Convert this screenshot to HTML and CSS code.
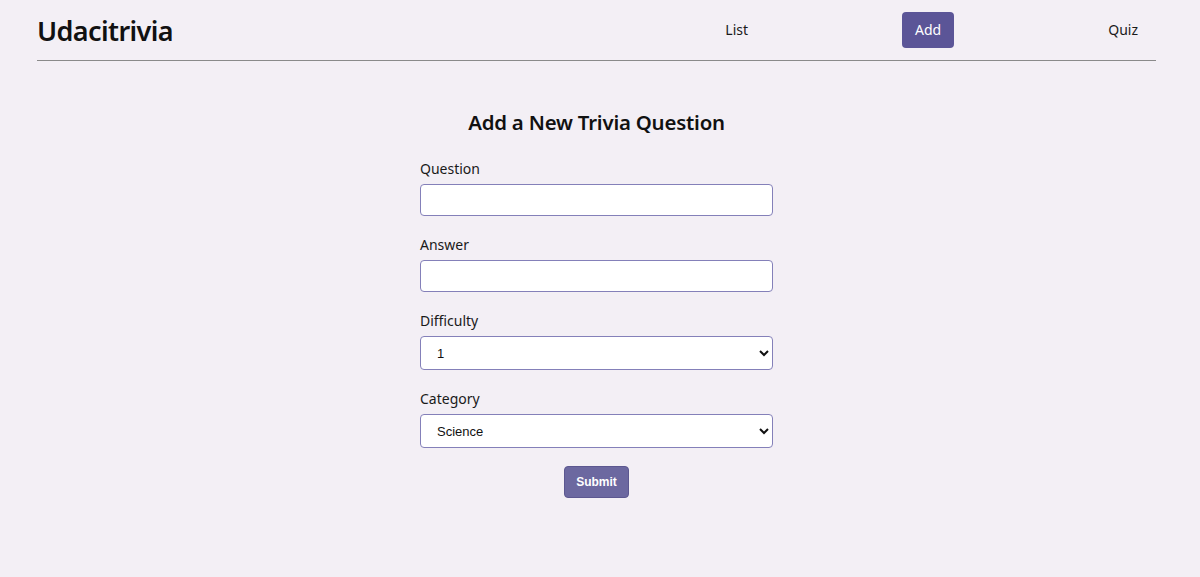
FILE: index.html
```html
<!DOCTYPE html>
<html lang="en">
<head>
<meta charset="utf-8">
<title>Udacitrivia</title>
<link rel="stylesheet" href="styles.css">
</head>
<body>
<div class="app">
  <header class="header">
    <h1 class="brand">Udacitrivia</h1>
    <nav class="nav">
      <span class="nav-item">List</span>
      <span class="nav-item nav-item-active">Add</span>
      <span class="nav-item">Quiz</span>
    </nav>
  </header>
  <main class="main">
    <h2 class="form-title">Add a New Trivia Question</h2>
    <form class="form">
      <div class="field">
        <label class="label">Question</label>
        <input class="input" type="text">
      </div>
      <div class="field">
        <label class="label">Answer</label>
        <input class="input" type="text">
      </div>
      <div class="field">
        <label class="label">Difficulty</label>
        <select class="select">
          <option>1</option>
          <option>2</option>
          <option>3</option>
          <option>4</option>
          <option>5</option>
        </select>
      </div>
      <div class="field">
        <label class="label">Category</label>
        <select class="select">
          <option>Science</option>
          <option>Art</option>
          <option>Geography</option>
          <option>History</option>
          <option>Entertainment</option>
          <option>Sports</option>
        </select>
      </div>
      <div class="actions">
        <button class="submit" type="button">Submit</button>
      </div>
    </form>
  </main>
</div>
</body>
</html>
```
FILE: styles.css
```css
* { box-sizing: border-box; }
html, body {
  margin: 0;
  padding: 0;
  background: #f3eff5;
  height: 100%;
}
body {
  font-family: "Noto Sans", "Open Sans", sans-serif;
  color: #111;
}
.app {
  padding: 0 44px 0 37px;
}
.header {
  display: flex;
  align-items: center;
  justify-content: space-between;
  height: 61px;
  border-bottom: 1px solid #8a8a8a;
}
.brand {
  margin: 0;
  font-size: 27px;
  font-weight: 600;
  letter-spacing: -0.6px;
  color: #111;
}
.nav {
  display: flex;
  align-items: center;
  gap: 141px;
  padding-right: 5px;
}
.nav-item {
  font-size: 14px;
  line-height: 20px;
  padding: 8px 13px;
  color: #1a1a1a;
  border-radius: 4px;
}
.nav-item-active {
  background: #5b5597;
  color: #fff;
}
.main {
  display: flex;
  flex-direction: column;
  align-items: center;
}
.form-title {
  margin: 46px 0 21px;
  font-size: 20.4px;
  line-height: 30px;
  font-weight: 600;
  letter-spacing: -0.2px;
  color: #111;
}
.form {
  width: 353px;
  display: flex;
  flex-direction: column;
  gap: 18px;
}
.field {
  display: flex;
  flex-direction: column;
  gap: 5px;
}
.label {
  font-size: 14px;
  line-height: 21px;
  color: #1a1a1a;
}
.input {
  height: 32px;
  background: #fff;
  border: 1px solid #8480b9;
  border-radius: 4px;
  padding: 0 8px;
  font-family: "Liberation Sans", Arial, sans-serif;
  font-size: 13px;
}
.select {
  height: 34px;
  background: #fff;
  border: 1px solid #8480b9;
  border-radius: 4px;
  padding: 0 12px;
  font-family: "Liberation Sans", Arial, sans-serif;
  font-size: 13px;
  color: #111;
}
.actions {
  display: flex;
  justify-content: center;
}
.submit {
  width: 65px;
  height: 32px;
  background: #6c68a0;
  border: 1px solid #5c5790;
  border-radius: 4px;
  color: #fff;
  font-family: "Liberation Sans", Arial, sans-serif;
  font-weight: 700;
  font-size: 12px;
  padding: 0;
}
```
